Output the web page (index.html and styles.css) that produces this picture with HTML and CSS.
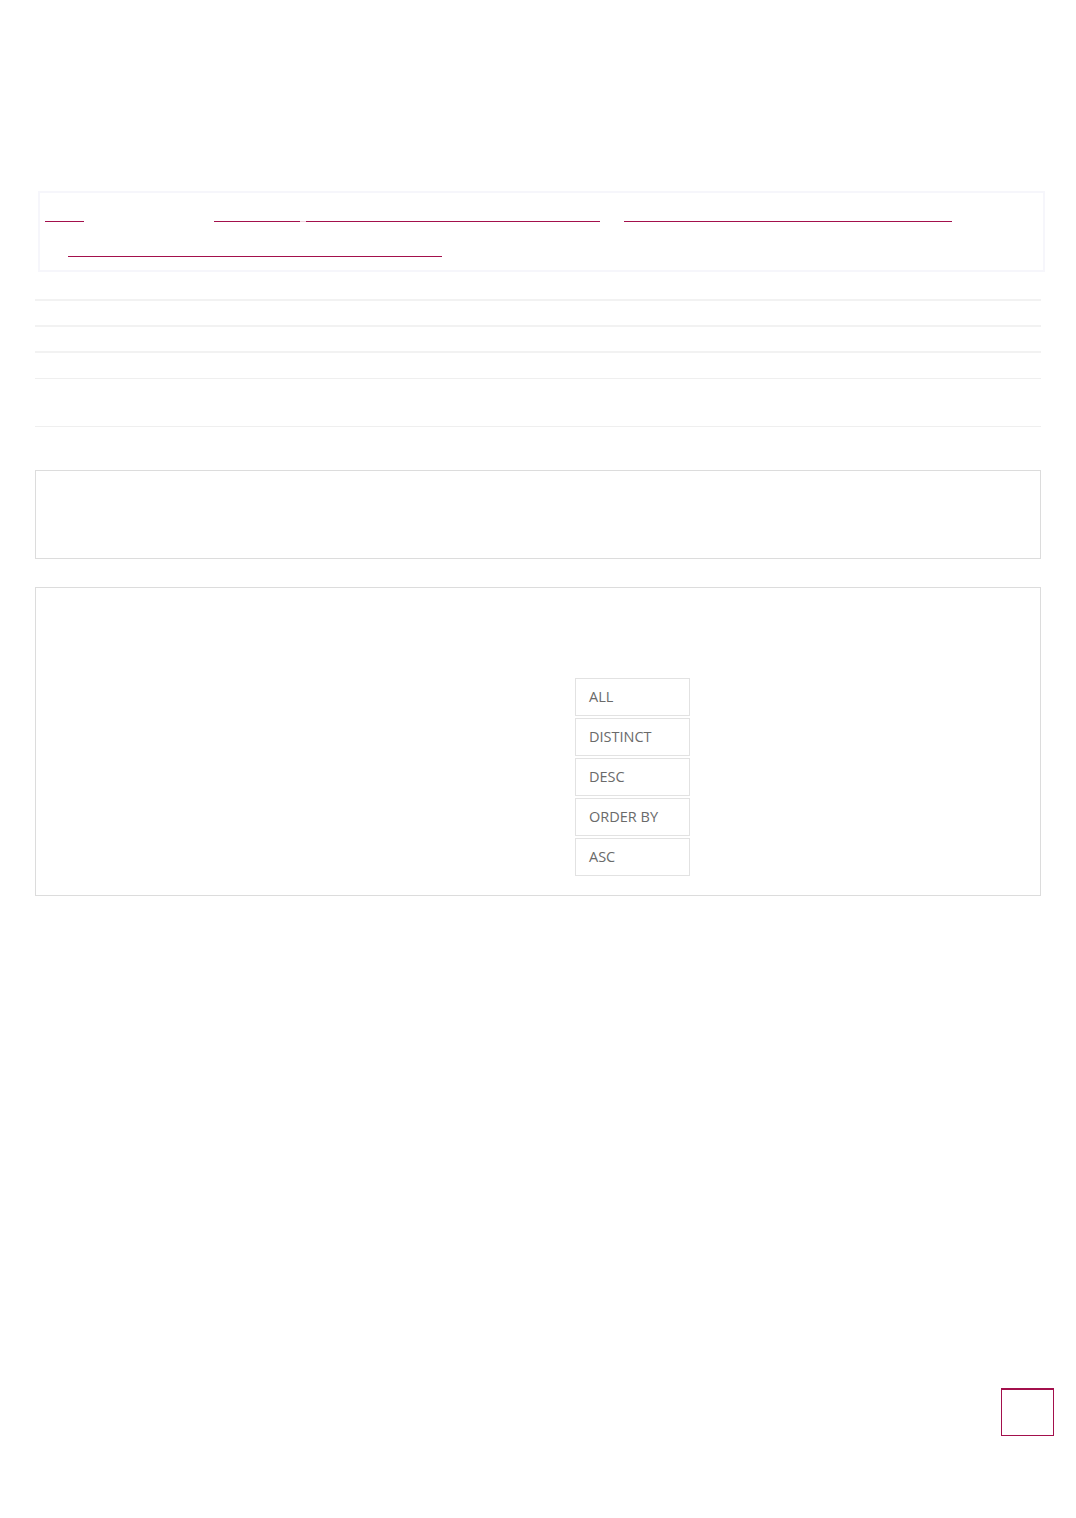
FILE: index.html
```html
<!DOCTYPE html>
<html lang="en">
<head>
    <meta charset="UTF-8">
    <meta name="viewport" content="width=device-width, initial-scale=1.0">
    <title>SQL Keywords</title>
    <link rel="stylesheet" href="styles.css">
</head>
<body>
    <div class="page">
        <nav class="crumbs">
            <div class="crumb-row">
                <a class="crumb w-home" href="#">Home</a>
                <a class="crumb w-sql gap-first" href="#">SQL Tutorial</a>
                <span class="crumb-sep">&nbsp;</span>
                <a class="crumb w-kw" href="#">SQL Keywords Reference</a>
                <a class="crumb w-sel gap-second" href="#">SELECT DISTINCT Statement</a>
            </div>
            <div class="crumb-row second">
                <a class="crumb w-ord" href="#">ORDER BY Keyword Reference</a>
            </div>
        </nav>

        <div class="rules">
            <div class="rule thick"></div>
            <div class="rule thick"></div>
            <div class="rule thick mid"></div>
            <div class="rule thin tall"></div>
        </div>

        <section class="panel short"></section>

        <section class="panel keywords">
            <ul class="kw-list">
                <li class="kw">ALL</li>
                <li class="kw">DISTINCT</li>
                <li class="kw">DESC</li>
                <li class="kw">ORDER BY</li>
                <li class="kw">ASC</li>
            </ul>
        </section>
    </div>

    <a class="to-top" href="#" aria-label="Back to top"></a>
</body>
</html>
```

FILE: styles.css
```css
body {
    margin: 0;
    background-color: #fff;
    font-family: "Open Sans", "Liberation Sans", sans-serif;
    font-size: 14px;
    color: #666;
}
.page {
    padding: 0 35px;
}

/* breadcrumb box, text is hidden, only underlines show */
.crumbs {
    margin: 191px -4px 0 3px;
    height: 77px;
    border: 2px solid #f6f6fb;
    padding: 0 5px;
}
.crumb-row {
    display: flex;
    align-items: flex-end;
    height: 29px;
}
.crumb-row.second {
    height: 35px;
    padding-left: 23px;
}
.crumb {
    display: block;
    height: 20px;
    border-bottom: 1px solid #a3104c;
    color: transparent;
    text-decoration: none;
    overflow: hidden;
    white-space: nowrap;
}
.crumb-sep {
    display: block;
    width: 6px;
    height: 20px;
    border-bottom: 1px solid #f1d3df;
}
.w-home { width: 39px; }
.w-sql { width: 86px; }
.w-kw { width: 294px; }
.w-sel { width: 328px; }
.w-ord { width: 374px; }
.gap-first { margin-left: 130px; }
.gap-second { margin-left: 24px; }

.rules {
    margin-top: 27px;
}
.rule {
    height: 24px;
}
.rule.thick {
    border-top: 2px solid #f2f2f2;
}
.rule.mid {
    height: 25px;
}
.rule.thin {
    border-top: 1px solid #efefef;
}
.rule.tall {
    height: 47px;
    border-bottom: 1px solid #efefef;
}

.panel {
    border: 1px solid #dcdcdc;
}
.panel.short {
    margin-top: 43px;
    height: 87px;
}
.panel.keywords {
    box-sizing: border-box;
    margin-top: 28px;
    height: 309px;
    padding: 90px 0 0 539px;
}
.kw-list {
    list-style: none;
    margin: 0;
    padding: 0;
    width: 115px;
}
.kw {
    box-sizing: border-box;
    height: 38px;
    margin-bottom: 2px;
    padding-left: 13px;
    border: 1px solid #e2e2e2;
    font-size: 14.5px;
    line-height: 35px;
    color: #6a6a6a;
}

.to-top {
    position: fixed;
    right: 22px;
    bottom: 82px;
    box-sizing: border-box;
    width: 53px;
    height: 48px;
    border: 1px solid #a3104c;
    border-top-width: 2px;
    background: #fff;
}
```
